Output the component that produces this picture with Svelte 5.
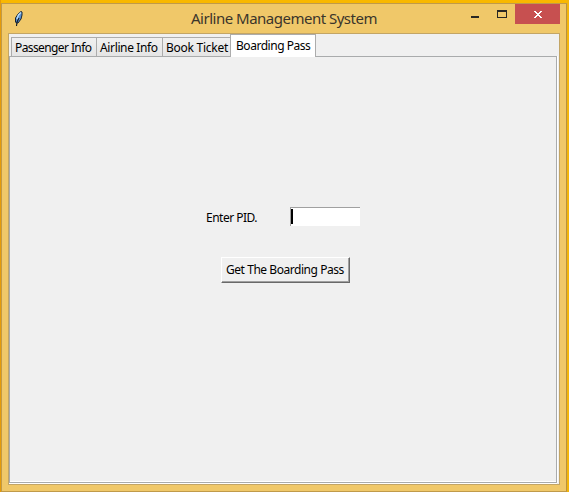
<script>
  let active = $state(3);
  const tabs = [
    { label: 'Passenger Info', width: 86, spacing: -0.6 },
    { label: 'Airline Info', width: 67, spacing: -0.36 },
    { label: 'Book Ticket', width: 69, spacing: -0.26 },
    { label: 'Boarding Pass', width: 86, spacing: -0.46 }
  ];
</script>

<div class="desktop">
  <div class="window">
    <header>
      <svg class="feather" width="12" height="18" viewBox="0 0 12 18">
        <path d="M8 1.500 5 4 2.500 8v4l1 1h1.500L8 9l1-4V2Z" fill="#5a92d4" stroke="#182431" stroke-width="1" />
        <path d="M8 2.500 5.500 5 4 9" fill="none" stroke="#b8dcf8" stroke-width="1.400" />
        <path d="M6 8 4 12 3.500 16" fill="none" stroke="#101820" stroke-width="1.100" />
      </svg>
      <h1>Airline Management System</h1>
      <div class="controls">
        <svg width="60" height="20" viewBox="0 0 60 20" shape-rendering="crispEdges">
          <path d="M16 12h8v2h-8z" fill="#292723" />
          <path fill-rule="evenodd" d="M42 6h10v8H42zM43 8v5h8V8z" fill="#292723" />
        </svg>
        <button class="close" aria-label="Close">
          <svg width="8" height="7" viewBox="0 0 8 7" shape-rendering="crispEdges">
            <path d="M0 0h2v1h1v1h2V1h1V0h2v1H7v1H6v1H5v1h1v1h1v1h1v1H6V6H5V5H3v1H2v1H0V6h1V5h1V4h1V3H2V2H1V1H0z" fill="#fff" />
          </svg>
        </button>
      </div>
    </header>
    <main>
      <nav>
        {#each tabs as tab, i}
          <button class="tab" class:active={active === i} onclick={() => (active = i)} style="width:{tab.width}px;letter-spacing:{tab.spacing}px">{tab.label}</button>
        {/each}
      </nav>
      <section>
        <div class="field">
          <span class="label">Enter PID.</span>
          <div class="entry"><i></i></div>
        </div>
        <button class="submit">Get The Boarding Pass</button>
      </section>
    </main>
  </div>
</div>

<style>
  :global(body) { margin: 0; overflow: hidden; }
  * { box-sizing: border-box; }
  button { font: inherit; color: inherit; margin: 0; border-radius: 0; white-space: nowrap; }
  .desktop {
    width: 569px; height: 492px; padding: 3px 2px 0 1px;
    background: linear-gradient(90deg, #e59b08 0 1px, transparent 1px 567px, #f3b50c 567px), #f9b800;
    font: 12px/16px "Noto Sans", "Open Sans", sans-serif; color: #000;
  }
  .window {
    width: 566px; height: 489px; padding: 0 6px;
    background: #f0c869; border: 1px solid #c09a4a; border-right-color: #b9923d;
  }
  header { height: 29px; display: flex; position: relative; }
  .feather { margin: 6px 0 0 5px; }
  h1 {
    margin: 4px 0 0; width: 188px; position: absolute; left: 183px; top: 0;
    font-size: 15px; line-height: 20px; font-weight: 400; letter-spacing: -0.5px; color: #3b352b; white-space: nowrap;
  }
  .controls { display: flex; margin-left: auto; height: 20px; }
  .close {
    width: 45px; height: 20px; padding: 1px 0 0; border: 0; background: #c75050;
    display: flex; align-items: center; justify-content: center;
  }
  main { width: 552px; height: 452px; border: 1px solid #c3a565; background: #f0f0f0; display: flex; flex-direction: column; }
  nav { height: 22px; padding: 0 0 0 2px; display: flex; align-items: flex-end; }
  .tab {
    height: 19px; padding: 2px 0 0 3px; text-align: left; border: 1px solid #acacac; border-bottom: 0;
    background: linear-gradient(#f0f0f0, #e5e5e5); line-height: 16px;
  }
  .tab + .tab { margin-left: -1px; }
  .tab.active { position: relative; height: 23px; margin-bottom: -1px; padding: 2px 0 3px 5px; background: #fff; }
  section {
    width: 548px; height: 427px; border: 1px solid #a9abac; box-shadow: inset 0 -1px #fff, 0 1px #fff, 1px 0 #fff;
    display: flex; flex-direction: column; padding: 150px 0 0 196px; align-items: flex-start;
  }
  .field { display: flex; height: 19px; }
  .label { width: 84px; padding-top: 3px; letter-spacing: -0.5px; }
  .entry { width: 70px; height: 19px; background: #fff; border-top: 1px solid #a0a0a0; border-left: 1px solid #a0a0a0; padding: 1px 0 0; }
  .entry i { display: block; width: 2px; height: 15px; background: #000; }
  .submit {
    width: 129px; height: 26px; margin: 31px 0 0 15px; padding: 0 0 0 4px; text-align: left;
    background: #f0f0f0; border: 1px solid; border-color: #fff #696969 #696969 #fff; box-shadow: inset -1px -1px #a0a0a0;
    letter-spacing: -0.45px;
  }
</style>
